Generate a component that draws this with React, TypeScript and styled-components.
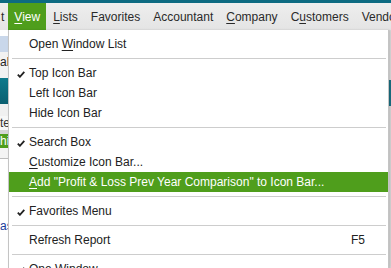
import React from 'react';
import styled, { createGlobalStyle } from 'styled-components';

const GlobalStyle = createGlobalStyle`
  html, body {
    margin: 0;
    padding: 0;
    background: #ffffff;
  }
  body {
    font-family: 'Liberation Sans', Arial, sans-serif;
    font-size: 12px;
  }
`;

const Screen = styled.div`
  position: relative;
  width: 391px;
  height: 268px;
  overflow: hidden;
  display: flex;
  flex-direction: column;
  background: #ffffff;
`;

const TitleStripe = styled.div`
  height: 3px;
  flex-shrink: 0;
  background: #0d6b82;
`;

const MenuBar = styled.div`
  display: flex;
  align-items: stretch;
  height: 27px;
  flex-shrink: 0;
  padding-left: 1px;
  background: linear-gradient(#eeeeee, #e4e4e4);
  white-space: nowrap;
  overflow: hidden;
`;

const BarItem = styled.div<{ $active?: boolean; $tight?: boolean }>`
  display: flex;
  align-items: center;
  flex-shrink: 0;
  padding: ${(p) => (p.$tight ? '0 4px 0 0' : '0 6px')};
  margin-right: ${(p) => (p.$tight ? '0' : '1px')};
  color: ${(p) => (p.$active ? '#ffffff' : '#2a2a2a')};
  background: ${(p) => (p.$active ? '#4f9e1c' : 'transparent')};
  font-size: 12px;
`;

const Key = styled.span`
  text-decoration: underline;
  text-underline-offset: 2px;
`;

const Workspace = styled.div`
  flex: 1;
  min-height: 0;
  display: flex;
  overflow: hidden;
`;

const LeftPane = styled.div`
  width: 9px;
  display: flex;
  flex-direction: column;
  background: #f4f4f4;
  overflow: hidden;
`;

const PaneBlock = styled.div<{ $h: number; $bg: string; $color?: string }>`
  height: ${(p) => p.$h}px;
  flex-shrink: 0;
  background: ${(p) => p.$bg};
  color: ${(p) => p.$color || '#333'};
  font-size: 12px;
  line-height: ${(p) => p.$h}px;
  white-space: nowrap;
  overflow: hidden;
`;

const Center = styled.div`
  flex: 1;
`;

const RightPane = styled.div`
  width: 3px;
  display: flex;
  flex-direction: column;
  background: #d9d9d9;
  overflow: hidden;
`;

const Dropdown = styled.div`
  position: absolute;
  top: 30px;
  left: 8px;
  width: 381px;
  height: 260px;
  padding-top: 4px;
  box-sizing: border-box;
  background: #ffffff;
  border-left: 1px solid #c4c4c4;
  border-right: 1px solid #c4c4c4;
  box-shadow: 1px 0 2px rgba(0, 0, 0, 0.15);
  display: flex;
  flex-direction: column;
`;

const Item = styled.div<{ $active?: boolean }>`
  position: relative;
  display: flex;
  align-items: center;
  justify-content: space-between;
  height: 20px;
  flex-shrink: 0;
  padding: 0 23px 0 20px;
  color: ${(p) => (p.$active ? '#ffffff' : '#222222')};
  background: ${(p) => (p.$active ? '#4f9e1c' : 'transparent')};
  white-space: nowrap;
`;

const Check = styled.svg`
  position: absolute;
  left: 8px;
  top: 8px;
`;

const Separator = styled.div`
  height: 9px;
  flex-shrink: 0;
  display: flex;
  align-items: center;
  padding: 0 2px 0 3px;

  &::after {
    content: '';
    flex: 1;
    height: 1px;
    background: #cdcdcd;
  }
`;

const Tick = () => (
  <Check width="8" height="7" viewBox="0 0 8 7">
    <path d="M0.8 3.6 L2.9 5.8 L7.3 0.8" fill="none" stroke="#222" strokeWidth="1.8" />
  </Check>
);

type Entry =
  | { sep: true }
  | { label: React.ReactNode; checked?: boolean; active?: boolean; shortcut?: string };

const entries: Entry[] = [
  { label: <>Open <Key>W</Key>indow List</> },
  { sep: true },
  { label: 'Top Icon Bar', checked: true },
  { label: 'Left Icon Bar' },
  { label: 'Hide Icon Bar' },
  { sep: true },
  { label: 'Search Box', checked: true },
  { label: <><Key>C</Key>ustomize Icon Bar...</> },
  { label: <><Key>A</Key>dd "Profit &amp; Loss Prev Year Comparison" to Icon Bar...</>, active: true },
  { sep: true },
  { label: 'Favorites Menu', checked: true },
  { sep: true },
  { label: 'Refresh Report', shortcut: 'F5' },
  { sep: true },
  { label: 'One Window', checked: true },
];

export default function App() {
  return (
    <>
      <GlobalStyle />
      <Screen>
        <TitleStripe />
        <MenuBar>
          <BarItem $tight>t</BarItem>
          <BarItem $active>
            <span><Key>V</Key>iew</span>
          </BarItem>
          <BarItem><span><Key>L</Key>ists</span></BarItem>
          <BarItem>Favorites</BarItem>
          <BarItem>Accountant</BarItem>
          <BarItem><span><Key>C</Key>ompany</span></BarItem>
          <BarItem><span>C<Key>u</Key>stomers</span></BarItem>
          <BarItem>Vendors</BarItem>
        </MenuBar>
        <Workspace>
          <LeftPane>
            <PaneBlock $h={6} $bg="#ffffff" />
            <PaneBlock $h={16} $bg="#c9d7ea" />
            <PaneBlock $h={20} $bg="#f2f2f2" $color="#222">ale</PaneBlock>
            <PaneBlock $h={6} $bg="#f2f2f2" />
            <PaneBlock $h={26} $bg="linear-gradient(#0f7a8c, #0b5f70)" />
            <PaneBlock $h={12} $bg="#f0f0f0" />
            <PaneBlock $h={14} $bg="#f7f7f7" $color="#333">te</PaneBlock>
            <PaneBlock $h={4} $bg="#d6d6d6" />
            <PaneBlock $h={14} $bg="#4f9e1c" $color="#fff">his</PaneBlock>
            <PaneBlock $h={10} $bg="#f4f4f4" />
            <PaneBlock $h={1} $bg="#bdbdbd" />
            <PaneBlock $h={60} $bg="#ffffff" />
            <PaneBlock $h={14} $bg="#ffffff" $color="#1a3c9a">as</PaneBlock>
            <PaneBlock $h={50} $bg="#ffffff" />
          </LeftPane>
          <Center />
          <RightPane>
            <PaneBlock $h={50} $bg="#d9d9d9" />
            <PaneBlock $h={26} $bg="#1a6f82" />
            <PaneBlock $h={160} $bg="#d6d6d6" />
          </RightPane>
        </Workspace>
        <Dropdown>
          {entries.map((e, i) =>
            'sep' in e ? (
              <Separator key={i} />
            ) : (
              <Item key={i} $active={e.active}>
                {e.checked && <Tick />}
                <span>{e.label}</span>
                {e.shortcut && <span>{e.shortcut}</span>}
              </Item>
            )
          )}
        </Dropdown>
      </Screen>
    </>
  );
}
